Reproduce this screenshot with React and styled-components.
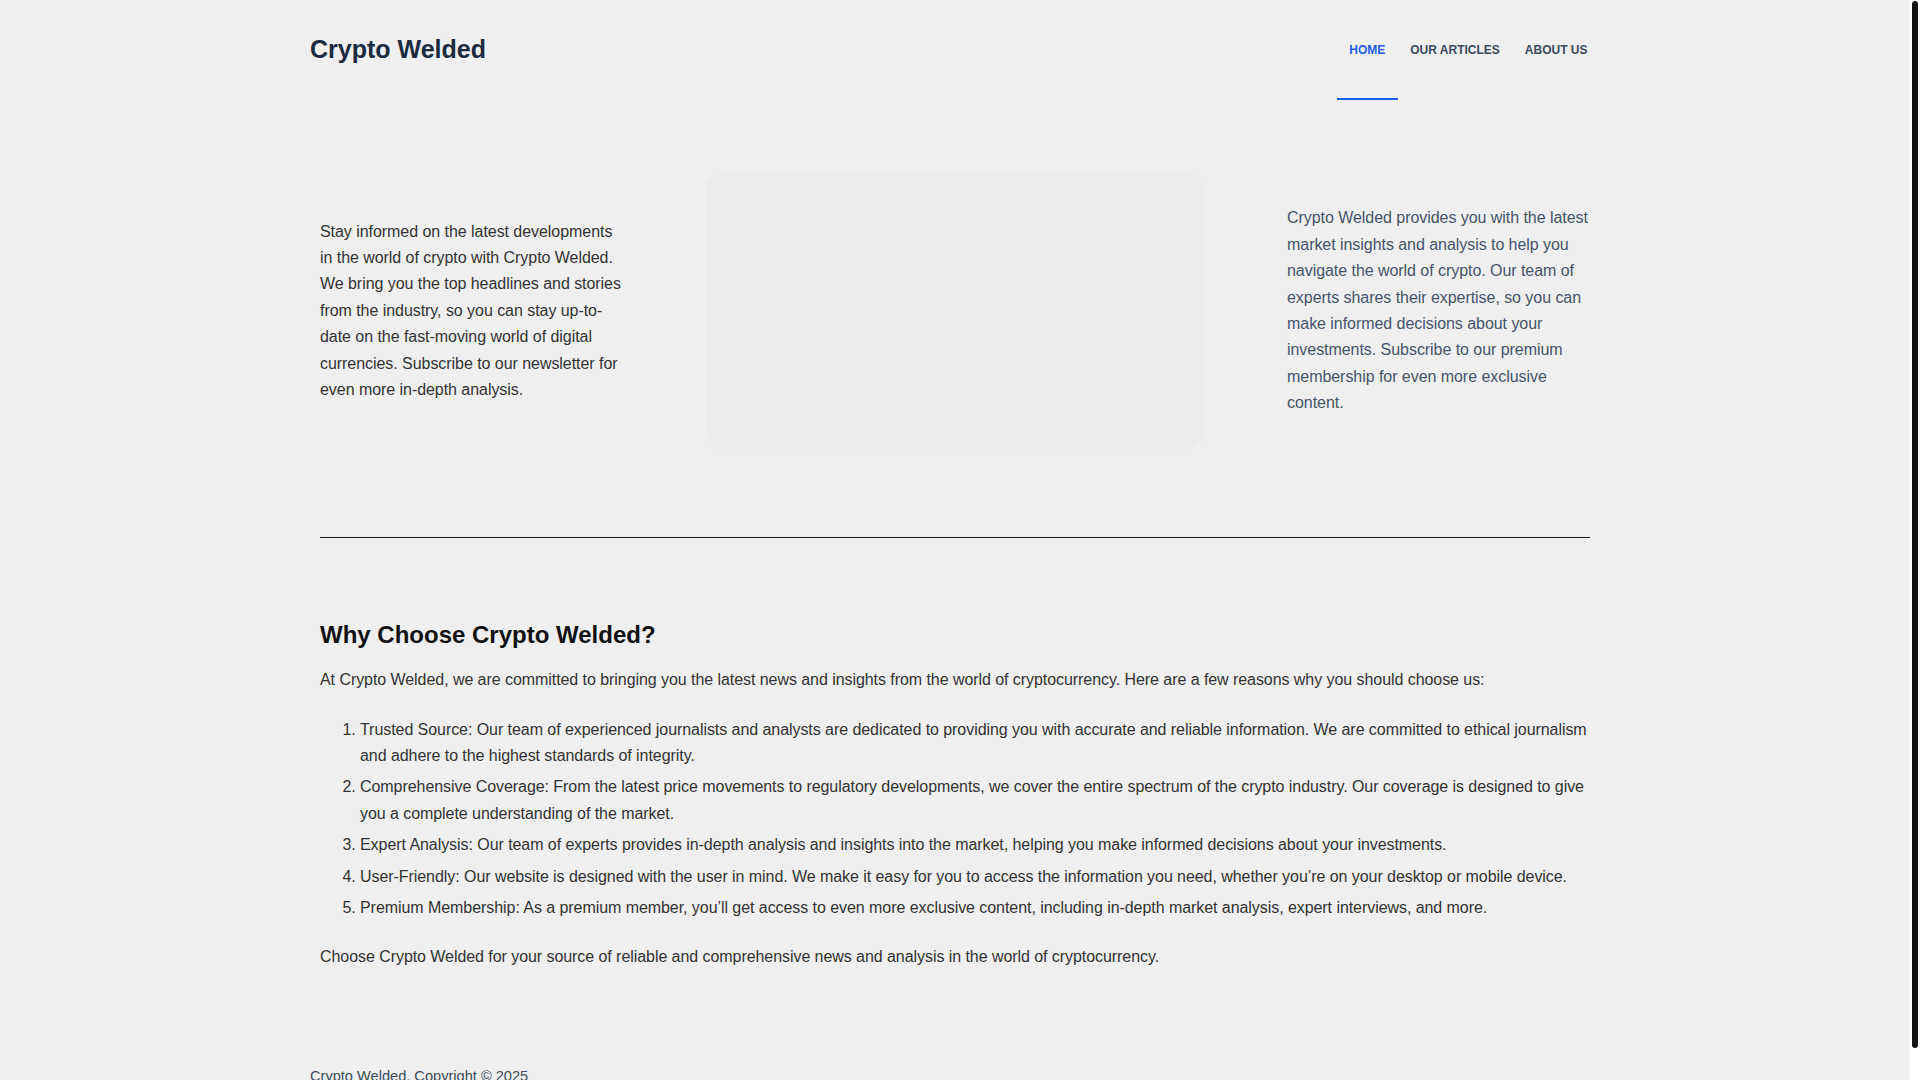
import React from "react";
import styled, { createGlobalStyle } from "styled-components";

const GlobalStyle = createGlobalStyle`
  html {
    scrollbar-width: none;
  }
  html, body {
    margin: 0;
    padding: 0;
    background: #efefef;
  }
  body {
    font-family: "Liberation Sans", Arial, Helvetica, sans-serif;
    color: #333;
    -webkit-font-smoothing: antialiased;
  }
  ::-webkit-scrollbar {
    display: none;
  }
`;

const Shell = styled.div`
  display: flex;
  align-items: flex-start;
`;

const Page = styled.div`
  flex: 1;
  min-width: 0;
  display: flex;
  flex-direction: column;
`;

const ScrollRail = styled.div`
  position: sticky;
  top: 0;
  flex: none;
  width: 10px;
  height: 100vh;
  box-sizing: border-box;
  padding: 1px 2px 0;
  background: #fff;
`;

const ScrollThumb = styled.div`
  height: 97%;
  background: #141414;
  border-radius: 3px;
`;

const Header = styled.header`
  width: 1290px;
  margin: 0 auto;
  height: 100px;
  display: flex;
  align-items: center;
  justify-content: space-between;
`;

const Logo = styled.a`
  font-size: 25px;
  font-weight: 700;
  color: #1b2a3e;
  text-decoration: none;
  line-height: 1;
  margin-top: -2px;
`;

const Nav = styled.nav`
  display: flex;
  align-items: stretch;
  height: 100%;
`;

const NavLink = styled.a`
  display: flex;
  align-items: center;
  padding: 0 12.5px;
  font-size: 12px;
  font-weight: 700;
  text-transform: uppercase;
  text-decoration: none;
  color: ${(p) => (p.$active ? "#1f5eea" : "#3b4a5f")};
  box-shadow: ${(p) => (p.$active ? "inset 0 -2px 0 #1f5eea" : "none")};
`;

const Hero = styled.section`
  width: 1270px;
  margin: 0 auto;
  padding-top: 73px;
  display: grid;
  grid-template-columns: 303px 498px 1fr;
  column-gap: 83px;
  align-items: center;
`;

const HeroText = styled.p`
  margin: 0;
  font-size: 16px;
  line-height: 26.4px;
  letter-spacing: -0.05px;
  color: ${(p) => (p.$muted ? "#46546a" : "#333")};
`;

const ImageBox = styled.div`
  height: 276px;
  background: #eaebed;
  border-radius: 18px;
`;

const Divider = styled.hr`
  width: 1270px;
  margin: 88px auto 0;
  border: 0;
  border-top: 1px solid #1a1a1a;
  height: 0;
`;

const Article = styled.article`
  width: 1270px;
  margin: 0 auto;
  padding: 81px 0 64px;
`;

const Title = styled.h2`
  margin: 0 0 17px;
  font-size: 24px;
  line-height: 31.2px;
  font-weight: 700;
  color: #111;
`;

const Para = styled.p`
  margin: 0;
  font-size: 16px;
  line-height: 26.4px;
  letter-spacing: -0.06px;
  color: #333;
`;

const List = styled.ol`
  margin: 23px 0 23px;
  padding-left: 40px;
`;

const Item = styled.li`
  font-size: 16px;
  line-height: 26.4px;
  letter-spacing: -0.06px;
  color: #333;
  & + & {
    margin-top: 5px;
  }
`;

const Footer = styled.footer`
  width: 1290px;
  margin: 0 auto;
  padding: 31px 0 30px;
`;

const FooterText = styled.p`
  margin: 0;
  font-size: 14.6px;
  line-height: 21px;
  color: #3d4b60;
`;

const items = [
  "Trusted Source: Our team of experienced journalists and analysts are dedicated to providing you with accurate and reliable information. We are committed to ethical journalism and adhere to the highest standards of integrity.",
  "Comprehensive Coverage: From the latest price movements to regulatory developments, we cover the entire spectrum of the crypto industry. Our coverage is designed to give you a complete understanding of the market.",
  "Expert Analysis: Our team of experts provides in-depth analysis and insights into the market, helping you make informed decisions about your investments.",
  "User-Friendly: Our website is designed with the user in mind. We make it easy for you to access the information you need, whether you\u2019re on your desktop or mobile device.",
  "Premium Membership: As a premium member, you\u2019ll get access to even more exclusive content, including in-depth market analysis, expert interviews, and more.",
];

export default function App() {
  return (
    <Shell>
      <GlobalStyle />
      <Page>
        <Header>
          <Logo href="#">Crypto Welded</Logo>
          <Nav>
            <NavLink href="#" $active>Home</NavLink>
            <NavLink href="#">Our Articles</NavLink>
            <NavLink href="#">About Us</NavLink>
          </Nav>
        </Header>

        <Hero>
          <HeroText>
            Stay informed on the latest developments in the world of crypto
            with Crypto Welded. We bring you the top headlines and stories from
            the industry, so you can stay up-to-date on the fast-moving world of
            digital currencies. Subscribe to our newsletter for even more
            in-depth analysis.
          </HeroText>
          <ImageBox />
          <HeroText $muted>
            Crypto Welded provides you with the latest market insights and
            analysis to help you navigate the world of crypto. Our team of
            experts shares their expertise, so you can make informed decisions
            about your investments. Subscribe to our premium membership for
            even more exclusive content.
          </HeroText>
        </Hero>

        <Divider />

        <Article>
          <Title>Why Choose Crypto Welded?</Title>
          <Para>
            At Crypto Welded, we are committed to bringing you the latest news
            and insights from the world of cryptocurrency. Here are a few
            reasons why you should choose us:
          </Para>
          <List>
            {items.map((t) => (
              <Item key={t}>{t}</Item>
            ))}
          </List>
          <Para>
            Choose Crypto Welded for your source of reliable and comprehensive
            news and analysis in the world of cryptocurrency.
          </Para>
        </Article>

        <Footer>
          <FooterText>Crypto Welded. Copyright © 2025</FooterText>
        </Footer>
      </Page>
      <ScrollRail>
        <ScrollThumb />
      </ScrollRail>
    </Shell>
  );
}
